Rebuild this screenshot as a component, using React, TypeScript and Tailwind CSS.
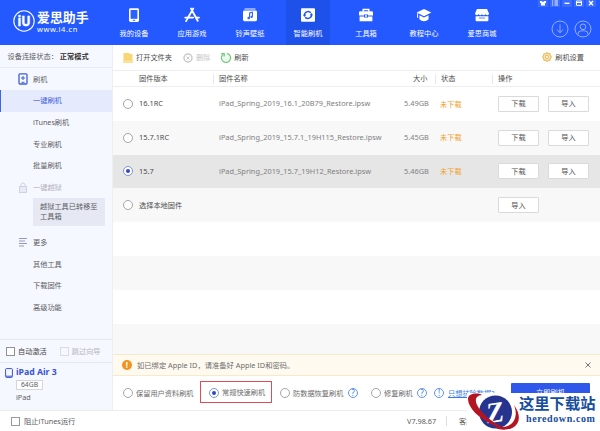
import React from "react";

type IconName = "device" | "apps" | "music" | "flash" | "toolbox" | "school" | "shop";

const NAV: { icon: IconName; label: string; active?: boolean }[] = [
  { icon: "device", label: "我的设备" },
  { icon: "apps", label: "应用游戏" },
  { icon: "music", label: "铃声壁纸" },
  { icon: "flash", label: "智能刷机", active: true },
  { icon: "toolbox", label: "工具箱" },
  { icon: "school", label: "教程中心" },
  { icon: "shop", label: "爱思商城" },
];

const FIRMWARES = [
  { version: "16.1RC", name: "iPad_Spring_2019_16.1_20B79_Restore.ipsw", size: "5.49GB", row: "bg-white" },
  { version: "15.7.1RC", name: "iPad_Spring_2019_15.7.1_19H115_Restore.ipsw", size: "5.45GB", row: "bg-[#f8f8f8]" },
  { version: "15.7", name: "iPad_Spring_2019_15.7_19H12_Restore.ipsw", size: "5.46GB", row: "bg-[#e6e6e6]", selected: true },
];

function NavIcon({ name }: { name: IconName }) {
  return (
    <svg viewBox="0 0 16 16" className="h-4 w-4" fill="none" stroke="white">
      {name === "device" && (
        <>
          <rect x="3" y="1.2" width="10" height="13.8" rx="1.4" fill="#fff" stroke="none" />
          <rect x="4.600" y="3" width="6.800" height="8.800" fill="#2c60ff" stroke="none" />
          <rect x="6.800" y="12.800" width="2.400" height="1" fill="#2c60ff" stroke="none" />
        </>
      )}
      {name === "apps" && (
        <>
          <path d="M7 1.6 9 5.2M9.2 1.6 3.4 11.8M2.6 13.2l-.5.9M9.3 5.8l4.4 8" strokeWidth="1.9" strokeLinecap="round" />
          <path d="M1.2 10.6h8M12 10.6h3" strokeWidth="1.8" strokeLinecap="round" />
        </>
      )}
      {name === "music" && (
        <>
          <path d="M2.5 2h11" strokeWidth="1.2" opacity=".8" />
          <rect x="1" y="3.4" width="14" height="10.8" rx="1.4" fill="#fff" stroke="none" />
          <path d="M7.6 10.6V6l2.8-.8v4.5" stroke="#2c60ff" strokeWidth="1.1" />
          <circle cx="6.7" cy="11" r="1.3" fill="#2c60ff" stroke="none" />
          <circle cx="9.6" cy="9.9" r="1.1" fill="#2c60ff" stroke="none" />
        </>
      )}
      {name === "flash" && (
        <>
          <rect x="1" y="1.2" width="14" height="13.6" rx="1" fill="#fff" stroke="none" />
          <path d="M4.5 8.4A3.6 3.6 0 0 1 10.8 5.8M11.5 7.6A3.6 3.6 0 0 1 5.2 10.2" stroke="#1e54ea" strokeWidth="1.5" />
          <path d="M2.9 7.8h3.4L4.5 10zM9.7 8.3h3.4L11.4 6z" fill="#1e54ea" stroke="none" />
        </>
      )}
      {name === "toolbox" && (
        <>
          <path d="M5.2 4.5V2.4h5.6v2.1" strokeWidth="1.5" />
          <path d="M1 5.4q0-1.2 1.2-1.2h11.6q1.2 0 1.2 1.2v3.1h-5V7.4H6v1.1H1zM1.6 9.5H6v1h4v-1h4.4v4.7H1.6z" fill="#fff" stroke="none" />
          <path d="M7 8.2h2v1.6H7z" fill="#fff" stroke="none" />
        </>
      )}
      {name === "school" && (
        <>
          <path d="m8 2 7.3 3.6L8 9.2.7 5.6z" fill="#fff" stroke="none" />
          <path d="M3.4 8.3 8 10.5l4.6-2.2v4q-2 1.9-4.6 1.9t-4.6-1.9z" fill="#fff" stroke="none" />
          <path d="M1.6 6.2v4.6" strokeWidth="1" />
        </>
      )}
      {name === "shop" && (
        <>
          <path d="M3 2h10l2 4.4q0 1.8-1.7 1.8T11.500 7q-.5 1.200-1.800 1.200T8 7Q7.500 8.200 6.300 8.200T4.500 7Q4 8.200 2.700 8.200T1 6.400z" fill="#fff" stroke="none" />
          <path d="M1.600 9.300h12.800V13.200q0 1-1 1H2.600q-1 0-1-1z" fill="#fff" stroke="none" />
          <path d="M5 11h6" stroke="#2c60ff" strokeWidth=".8" />
        </>
      )}
    </svg>
  );
}

function Radio({ checked }: { checked?: boolean }) {
  return (
    <span
      className={`flex h-[10px] w-[10px] shrink-0 items-center justify-center rounded-full border bg-white ${
        checked ? "border-[#7d95dc]" : "border-[#a6a6a6]"
      }`}
    >
      {checked && <span className="h-1 w-1 rounded-full bg-[#3049c8]" />}
    </span>
  );
}

function Help({ mark }: { mark: string }) {
  return (
    <span className="flex h-[10px] w-[10px] shrink-0 items-center justify-center rounded-full border border-[#5c94ee] text-[8px] leading-none text-[#397ce8]">
      {mark}
    </span>
  );
}

function RowButton({ children }: { children: React.ReactNode }) {
  return (
    <button className="flex h-4 w-[41px] items-center justify-center rounded-[1px] border border-[#dadada] bg-white text-[#555]">
      {children}
    </button>
  );
}

function Header() {
  return (
    <header className="relative flex h-[45px] shrink-0 bg-[#2459ff] text-white">
      {/* Logo */}
      <div className="flex w-[105px] shrink-0 pl-[13px]">
        <svg viewBox="0 0 22 22" className="mt-[10px] h-[22px] w-[22px]">
          <circle cx="11" cy="11" r="10.200" fill="none" stroke="white" strokeWidth="1.100" />
          <text
            x="11"
            y="16.300"
            textAnchor="middle"
            textLength="13"
            lengthAdjust="spacingAndGlyphs"
            fill="white"
            stroke="white"
            strokeWidth=".5"
            className="font-['Open_Sans',sans-serif] text-[14px] font-bold"
          >
            iU
          </text>
        </svg>
        <div className="ml-[2px] mt-[10px] whitespace-nowrap">
          <div className="h-[15px] text-[12.900px] font-bold leading-[15px]">爱思助手</div>
          <div className="text-[7.500px] leading-[9px] tracking-[0.550px]">www.i4.cn</div>
        </div>
      </div>

      {/* Navigation */}
      <nav className="flex">
        {NAV.map((item) => (
          <div key={item.label} className="flex w-[58px] justify-center">
            <div
              className={`flex h-full w-11 flex-col items-center whitespace-nowrap pt-[7px] ${
                item.active ? "bg-[#1e50ea]" : ""
              }`}
            >
              <NavIcon name={item.icon} />
              <span className="mt-[5px] leading-[10px]">{item.label}</span>
            </div>
          </div>
        ))}
      </nav>

      {/* Account buttons */}
      <div className="ml-auto mr-2 mt-[20px] flex gap-[5px]">
        <svg viewBox="0 0 18 18" className="h-[18px] w-[18px]" fill="none" stroke="#91adff">
          <circle cx="9" cy="9" r="8" />
          <path d="M9 4.500v8M5.800 9.600 9 12.700l3.200-3.100" />
        </svg>
        <svg viewBox="0 0 18 18" className="h-[18px] w-[18px]" fill="none" stroke="#91adff">
          <circle cx="9" cy="9" r="8" />
          <circle cx="9" cy="6.800" r="2.800" />
          <path d="M3.800 14.800q0-4 3.400-4h3.600q3.400 0 3.400 4" />
        </svg>
      </div>

      {/* Window controls */}
      <svg viewBox="0 0 62 8" className="absolute right-0 top-0 h-2 w-[62px]" fill="none" stroke="white">
        <path d="M0 0h10v7H0zM12 0h10v7H12zM24 0h10v7H24zM36 0h10v7H36zM48 0h10v7H48z" fill="#3c6bff" stroke="none" />
        <path d="M2 1h1.500L5 2l1.500-1H8v2H7v2.500H3V3H2z" fill="#fff" stroke="none" />
        <path d="M14 1h1.200M16.500 1h3.500M14 3h1.200M16.500 3h3.500M14 5h1.200M16.500 5h3.500" strokeWidth=".9" />
        <path d="M26.500 3.300h5" strokeWidth="1.300" />
        <path d="M38.500 1h5v4.300h-5zM38.500 2.500h5" />
        <path d="m51 1 4 4.200m0-4.200-4 4.200" strokeWidth="1.300" />
      </svg>
    </header>
  );
}

function SubItem({ children }: { children: React.ReactNode }) {
  return <div className="flex h-[21.7px] items-center pl-[33px]">{children}</div>;
}

function Sidebar() {
  return (
    <aside className="flex w-[113px] shrink-0 flex-col border-r border-[#eceef4] bg-[#f6f8ff] text-[#5c5e64]">
      <div className="flex h-[23px] items-center whitespace-nowrap border-b border-[#e8ebf5] pl-[7.500px]">
        设备连接状态：
        <span className="pl-[2px] font-bold text-[#333]">正常模式</span>
      </div>

      <div className="flex h-[22px] items-center pl-[18px]">
        <svg viewBox="0 0 10 12" className="mr-[5px] h-3 w-[10px]" fill="none" stroke="#3f5fd0">
          <rect x="1" y=".8" width="8" height="10.200" rx="1" strokeWidth="1.300" />
          <path d="M5 3v4M3 5h4M3.500 9.300h3" />
        </svg>
        刷机
      </div>
      <div className="flex h-[21.500px] items-center border-l border-[#3d65e8] bg-[#e5eafd] pl-8 text-[#3f5fdf]">一键刷机</div>
      <SubItem>iTunes刷机</SubItem>
      <SubItem>专业刷机</SubItem>
      <SubItem>批量刷机</SubItem>
      <div className="flex h-[22px] items-center pl-[18px] text-[#b0b2ba]">
        <svg viewBox="0 0 10 12" className="mr-[5px] h-3 w-[10px]" fill="none" stroke="#ccd2e2">
          <rect x="1.500" y="4.500" width="7" height="6" fill="#e8ebf6" />
          <path d="M3 4.500V3a2 2 0 0 1 4 0v1.500" />
        </svg>
        一键越狱
      </div>
      <div className="ml-[33px] mt-[-1px] flex h-[27px] w-[72px] items-center bg-[#e6e9f3] pl-[7px] leading-[10.500px]">
        越狱工具已转移至
        <br />
        工具箱
      </div>
      <div className="ml-[33px] mr-[7px] h-px bg-[#e8eaf2]" />

      <div className="mt-[6px] flex h-[21.700px] items-center pl-[18px]">
        <svg viewBox="0 0 10 10" className="mr-[5px] h-[10px] w-[10px]" stroke="#9398bf" strokeWidth="1.200">
          <path d="M1 1.500h8M1 4h6M1 6.500h8M1 9h5" />
        </svg>
        更多
      </div>
      <SubItem>其他工具</SubItem>
      <SubItem>下载固件</SubItem>
      <SubItem>高级功能</SubItem>

      {/* Connected device */}
      <div className="mt-auto flex h-6 shrink-0 items-center whitespace-nowrap border-y border-[#e5e8f1] pl-[6px]">
        <span className="mr-[3px] h-[9px] w-[9px] border border-[#929292] bg-white" />
        <span className="text-[#444]">自动激活</span>
        <span className="ml-[13px] mr-[3px] h-[9px] w-[9px] border border-[#dadce3]" />
        <span className="text-[#b5b7bd]">跳过向导</span>
      </div>
      <div className="h-[47px] shrink-0 pl-[5px] pt-[3px]">
        <div className="flex items-center text-[8.700px] font-bold leading-[13px] text-[#3953d8]">
          <svg viewBox="0 0 8 10" className="mr-[3px] h-[10px] w-2" fill="none" stroke="#3953d8">
            <rect x=".6" y=".6" width="6.800" height="8.800" rx=".8" />
            <path d="M1 8.200h6" />
          </svg>
          iPad Air 3
        </div>
        <div className="ml-[11px] mt-px flex h-[10px] w-[27px] items-center justify-center border border-[#d4d6dc] bg-white text-[6.800px]">
          64GB
        </div>
        <div className="ml-[11px] mt-[2px] leading-[10px]">iPad</div>
      </div>
    </aside>
  );
}

function Toolbar() {
  return (
    <div className="flex h-[25px] shrink-0 items-center whitespace-nowrap pl-[10px] pr-4 text-[#4c4c4c]">
      <svg viewBox="0 0 10 10" className="mr-[3px] h-[10px] w-[10px]">
        <path d="M.500 0h6v1h3v9h-9z" fill="#f9d675" />
        <path d="M.500 7.500h9V10h-9z" fill="#fae29a" />
      </svg>
      打开文件夹
      <svg viewBox="0 0 10 10" className="ml-[11px] mr-[3px] h-[10px] w-[10px]" fill="none" stroke="#c9c9c9">
        <circle cx="5" cy="5" r="4" strokeWidth="1.500" />
        <path d="m3.500 3.500 3 3m0-3-3 3" />
      </svg>
      <span className="text-[#c6c6c6]">删除</span>
      <svg viewBox="0 0 12 12" className="ml-[10px] mr-[2px] h-3 w-3" fill="none" stroke="#70c77a">
        <path d="M3 2.400A4.600 4.600 0 1 0 7 1.400" strokeWidth="1.200" fill="#ecfaed" />
        <path d="M1.200 1.600h3v3" strokeWidth="1.200" />
      </svg>
      刷新
      <span className="ml-auto flex items-center">
        <svg viewBox="0 0 10 10" className="mr-[3px] h-[10px] w-[10px]" fill="#f9e7b9" stroke="#e9bf61" strokeWidth="1.100">
          <path d="m5 .6 1.300 1 1.700.1.300 1.600L9.400 5l-1.100 1.700L8 8.300l-1.700.1-1.300 1-1.300-1L2 8.300l-.3-1.600L.6 5l1.100-1.700.3-1.600 1.700-.1z" />
          <circle cx="5" cy="5" r="1.600" fill="white" />
        </svg>
        刷机设置
      </span>
    </div>
  );
}

const GRID = "grid grid-cols-[26px_74px_6px_186px_44px_55px_1fr] items-center whitespace-nowrap";

function FirmwareTable() {
  return (
    <div className="flex min-h-0 flex-1 flex-col">
      <div className="flex h-[17px] shrink-0 items-center border-y border-[#eee] text-[#4c4c4c]">
        <span className="w-[100px] pl-[26px]">固件版本</span>
        <span className="h-[10px] w-[180px] border-l border-[#e8e8e8] pl-[5px] leading-[9px]">固件名称</span>
        <span className="w-[42px] pl-[20px]">大小</span>
        <span className="h-[10px] w-[57px] border-l border-[#e8e8e8] pl-[5px] leading-[9px]">状态</span>
        <span className="h-[10px] border-l border-[#e8e8e8] pl-[5px] leading-[9px]">操作</span>
      </div>
      {FIRMWARES.map((fw) => (
        <div key={fw.version} className={`${GRID} h-[33.800px] shrink-0 ${fw.row}`}>
          <span className="pl-[10px]">
            <Radio checked={fw.selected} />
          </span>
          <span className="text-[7.400px] text-[#4c4c4c]">{fw.version}</span>
          <span />
          <span className="text-[7.380px] text-[#808080]">{fw.name}</span>
          <span className="-ml-px text-[7.380px] text-[#808080]">{fw.size}</span>
          <span className="-ml-[9px] text-[#f4a02a]">未下载</span>
          <span className="-ml-[6px] flex gap-[9px]">
            <RowButton>下载</RowButton>
            <RowButton>导入</RowButton>
          </span>
        </div>
      ))}
      <div className={`${GRID} h-[33.800px] shrink-0 bg-[#f8f8f8]`}>
        <span className="pl-[10px]">
          <Radio />
        </span>
        <span className="col-span-5 text-[#4c4c4c]">选择本地固件</span>
        <span className="-ml-[6px]">
          <RowButton>导入</RowButton>
        </span>
      </div>
      <div className="h-[34px] shrink-0" />
      <div className="h-[33.500px] shrink-0 bg-[#f8f8f8]" />
      <div className="h-[34px] shrink-0" />
      <div className="flex-1 bg-[#f8f8f8]" />
    </div>
  );
}

function FlashOptions() {
  return (
    <div className="flex h-[34px] shrink-0 items-center whitespace-nowrap pl-[10px] pr-[10px] text-[#6c6c6c]">
      <Radio />
      <span className="ml-[3px] w-[64px]">保留用户资料刷机</span>
      <span className="-mt-[3px] flex h-[22px] w-[72px] items-center border border-[#df4b56] pl-2 pt-[2px]">
        <Radio checked />
        <span className="ml-[3px]">常规快速刷机</span>
      </span>
      <span className="ml-2 flex items-center gap-[3px]">
        <Radio />
        <span className="w-[51px]">防数据恢复刷机</span>
        <span className="ml-px">
          <Help mark="?" />
        </span>
      </span>
      <span className="ml-[13px] flex items-center gap-[3px]">
        <Radio />
        <span className="w-[30px]">修复刷机</span>
        <Help mark="?" />
      </span>
      <span className="ml-[7px] flex items-center gap-[4px]">
        <Help mark="!" />
        <span className="text-[#397ce8] underline">只想抹除数据?</span>
      </span>
      <button className="ml-auto flex h-5 w-[79px] items-center justify-center rounded-[1px] bg-[#2f57ea] pb-[2px] text-white">
        立即刷机
      </button>
    </div>
  );
}

function Watermark() {
  return (
    <div className="absolute bottom-0 right-0 flex h-[38px] w-[133px] bg-white">
      <svg viewBox="0 0 53 38" className="h-[38px] w-[53px] shrink-0 overflow-visible">
        <circle cx="28.500" cy="19" r="16.500" fill="#27348f" />
        <text
          x="28"
          y="29"
          textAnchor="middle"
          transform="rotate(-8 28 20)"
          fill="white"
          className="font-[Liberation_Serif,serif] text-[29px] font-bold italic"
        >
          Z
        </text>
        <path d="M15 2C11-.500 1 0 1 6c0 9 11 19 23 25 6 3 11 5 16 5-7-3-17-8-24-16C10 14 7 7 10 4q2-2 5-2z" fill="#b31523" />
        <path d="M47 12c6 8 7 17 0 22-6 4-16 3-20 0 8 1 15 0 19-5 4-6 3-12 1-17z" fill="#b31523" />
      </svg>
      <div className="whitespace-nowrap font-[Liberation_Serif,'Noto_Sans_CJK_SC',serif] font-bold text-[#164d9d]">
        <div className="-ml-px mt-px text-[15.300px] leading-[19px]">这里下载站</div>
        <div className="ml-[6px] text-[10px] leading-[11px] tracking-[0.600px]">heredown.com</div>
      </div>
    </div>
  );
}

export default function App() {
  return (
    <div className="relative flex h-[431px] w-[600px] flex-col overflow-hidden bg-white font-['Noto_Sans','Noto_Sans_CJK_SC',sans-serif] text-[7.200px]">
      <Header />

      <div className="flex h-[365px] shrink-0">
        <Sidebar />
        <main className="flex min-w-0 flex-1 flex-col">
          <Toolbar />
          <FirmwareTable />
          {/* Notice */}
          <div className="flex h-[22px] shrink-0 items-center border-y border-[#f8e9c9] bg-[#fffaf0] pl-[9px] pr-2 text-[7.300px] text-[#6c6c6c]">
            <span className="mr-[5px] flex h-[10px] w-[10px] items-center justify-center rounded-full bg-[#f3941f] text-[8px] font-bold text-white">
              !
            </span>
            如已绑定 Apple ID，请准备好 Apple ID和密码。
            <svg viewBox="0 0 8 8" className="ml-auto h-2 w-2" stroke="#777">
              <path d="m1.500 1.500 5 5m0-5-5 5" />
            </svg>
          </div>
          <FlashOptions />
        </main>
      </div>

      <footer className="flex flex-1 items-center border-t border-[#ececec] pl-[11px] text-[#5c5c5c]">
        <span className="mr-1 h-[9px] w-[9px] border border-[#999]" />
        <span className="text-[7.300px]">阻止iTunes运行</span>
        <span className="ml-auto w-[39px] shrink-0 text-[7.300px]">V7.98.67</span>
        <span className="flex h-[10px] w-[154px] items-center border-l border-[#ddd] pl-[12px]">客服</span>
      </footer>

      <Watermark />
    </div>
  );
}
